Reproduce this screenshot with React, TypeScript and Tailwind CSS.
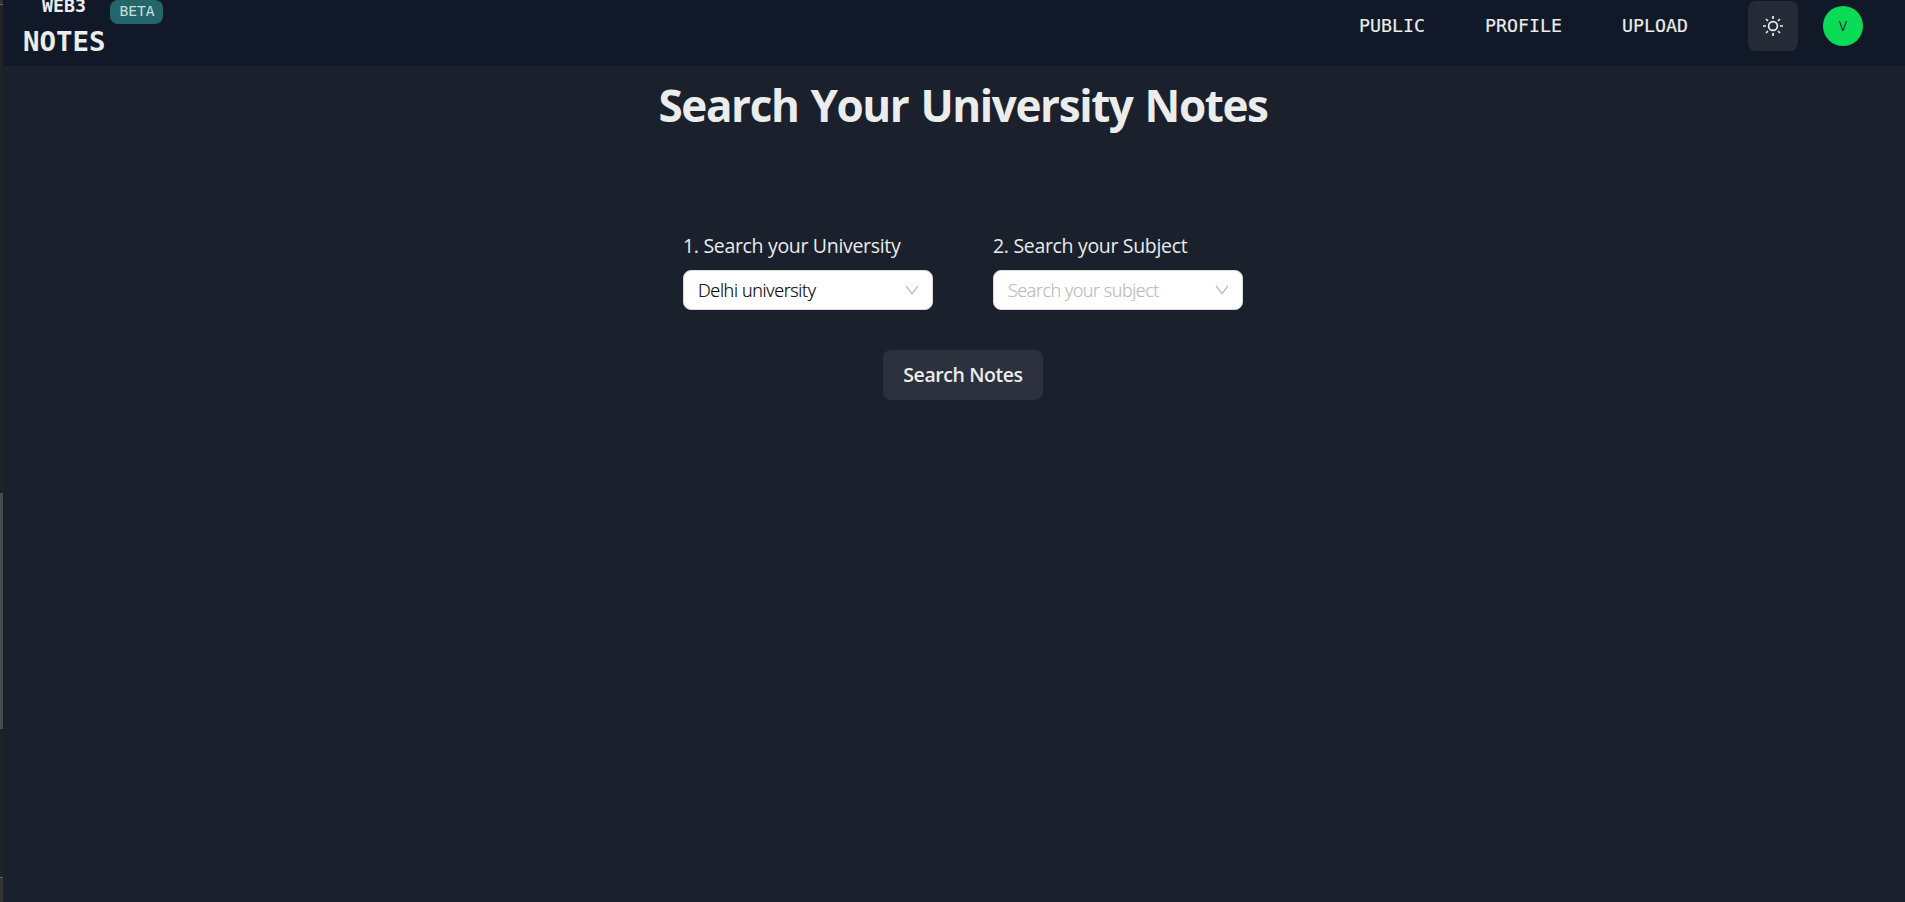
import { useState } from "react";

const links = ["PUBLIC", "PROFILE", "UPLOAD"];

export default function App() {
  return (
    <div className="flex h-[902px] w-full overflow-hidden bg-[#1a202c] text-[#ebecec] font-['Open_Sans','Noto_Sans',sans-serif]">
      <ScrollEdge />
      <div className="flex min-w-0 flex-1 flex-col">
        <Navbar />
        <SearchNotes />
      </div>
    </div>
  );
}

function ScrollEdge() {
  return (
    <div className="flex w-[3px] shrink-0 flex-col bg-[#202325]">
      <div className="h-1 bg-[#333333]" />
      <div className="h-px bg-[#6b6b6b]" />
      <div className="h-[488px]" />
      <div className="h-[236px] bg-[#474c4c]" />
      <div className="h-[148px]" />
      <div className="h-px bg-[#6b6b62]" />
      <div className="flex-1 bg-[#333333]" />
    </div>
  );
}

function Navbar() {
  return (
    <header className="flex h-[66px] shrink-0 items-start justify-between bg-[#111827] pl-5 pr-[42px] font-['DejaVu_Sans_Mono',monospace]">
      <div className="flex items-start">
        <div className="flex w-[82px] flex-col">
          <span className="-mt-[9px] self-center text-[18.27px] leading-[30px] font-bold">WEB3</span>
          <span className="mt-px text-[27.4px] leading-10 font-bold">NOTES</span>
        </div>
        <span className="ml-[5px] flex h-6 w-[53px] items-center justify-center rounded-lg bg-[#24666a] pb-px pl-px text-[14.6px] leading-none text-[#c8e0dd]">BETA</span>
      </div>
      <nav className="flex items-start">
        {links.map(link => (
          <a key={link} href="#" className="mr-[60px] mt-[11px] text-[18.27px] leading-[30px] [-webkit-text-stroke:0.15px_#ebecec]">{link}</a>
        ))}
        <button className="mt-px flex size-[50px] items-center justify-center rounded-lg bg-[#252a37]">
          <SunIcon />
        </button>
        <div className="ml-[25px] mt-1.5 flex size-10 items-center justify-center rounded-full bg-[#0bdb57] font-['Open_Sans',sans-serif] text-sm text-[#12352a]">V</div>
      </nav>
    </header>
  );
}

function SearchNotes() {
  const [university] = useState("Delhi university");
  return (
    <main className="flex flex-1 flex-col items-center pl-[18px]">
      <h1 className="mt-[9px] text-[44px] leading-[60px] font-bold tracking-[-1.4px] [word-spacing:2px] whitespace-nowrap">Search Your University Notes</h1>
      <div className="mt-[96px] flex gap-[60px]">
        <Field label="1. Search your University" value={university} />
        <Field label="2. Search your Subject" placeholder="Search your subject" />
      </div>
      <button className="mt-10 flex h-[50px] w-40 items-center justify-center rounded-lg bg-[#2d303d] text-[19.5px] font-semibold tracking-[-0.42px] whitespace-nowrap">Search Notes</button>
    </main>
  );
}

function Field({ label, value, placeholder }: { label: string; value?: string; placeholder?: string }) {
  return (
    <div className="w-[250px]">
      <p className="mb-[9px] text-[19.5px] leading-[30px] tracking-[-0.32px] whitespace-nowrap">{label}</p>
      <div className="flex h-10 items-center justify-between rounded-lg border border-[#d9d9d9] bg-white pl-[14px] pr-[13px]">
        <span className={`text-lg font-light whitespace-nowrap ${value ? "tracking-[-0.35px] text-black [-webkit-text-stroke:0.2px_black]" : "tracking-[-0.45px] text-[#b8b8b8] [-webkit-text-stroke:0.2px_#b8b8b8]"}`}>{value || placeholder}</span>
        <ChevronIcon />
      </div>
    </div>
  );
}

function ChevronIcon() {
  return (
    <svg className="h-[10px] w-[14px]" viewBox="0 0 14 10" fill="none" stroke="#b8b8b8" strokeWidth="1.3">
      <path d="M1 0.8L7 8.6L13 0.8" />
    </svg>
  );
}

function SunIcon() {
  return (
    <svg className="size-5" viewBox="0 0 20 20" fill="none" stroke="#ebecec" strokeWidth="1.7">
      <circle cx="10" cy="10" r="4.4" />
      <path d="M10 0v3M10 17v3M0 10h3M17 10h3M3 3l2 2M15 15l2 2M3 17l2-2M15 5l2-2" />
    </svg>
  );
}
